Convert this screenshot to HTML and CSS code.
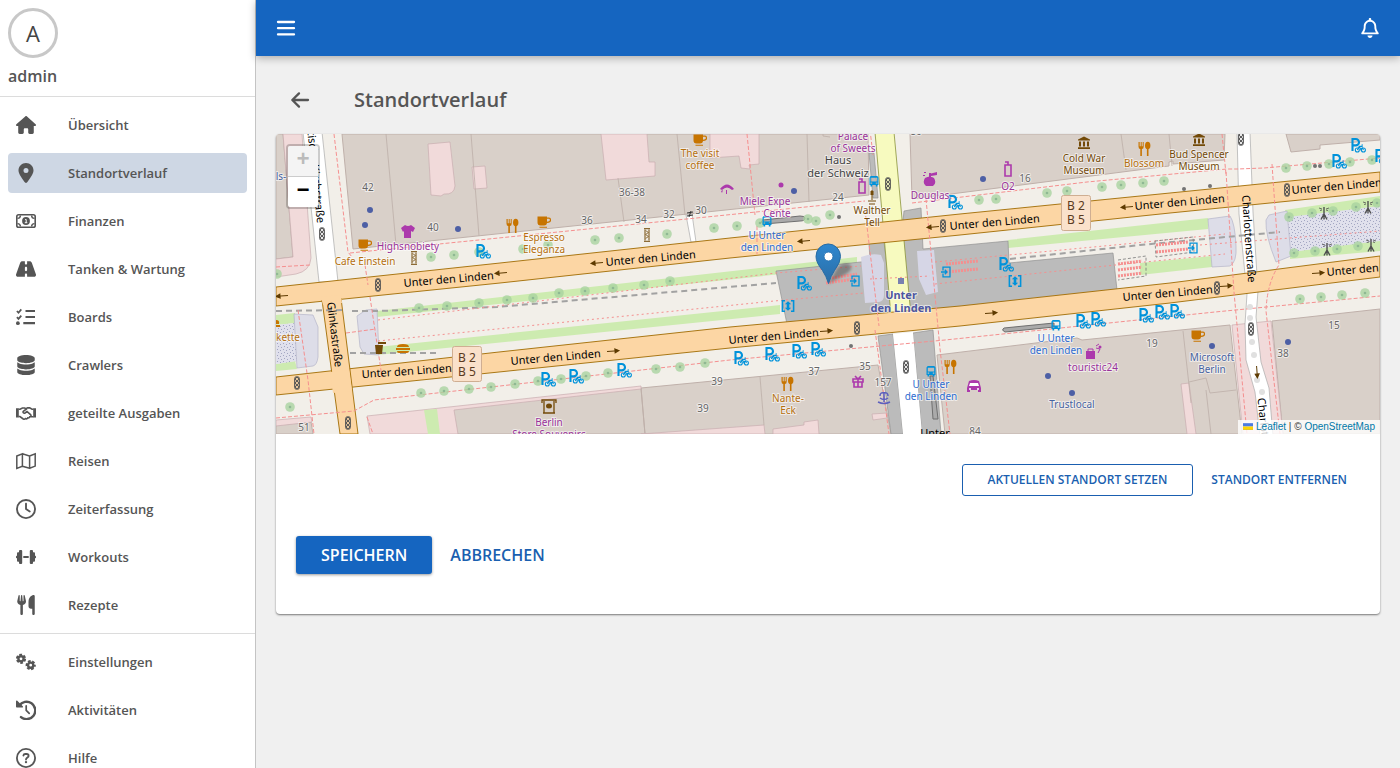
FILE: index.html
```html
<!DOCTYPE html>
<html lang="de">
<head>
<meta charset="utf-8">
<meta name="viewport" content="width=device-width, initial-scale=1">
<title>Standortverlauf</title>
<link rel="stylesheet" href="styles.css">
</head>
<body>
<div class="app">
<aside class="sidebar">
  <div class="profile">
    <div class="avatar">A</div>
    <div class="username">admin</div>
  </div>
  <nav class="nav">
    <a class="nav-item" href="#"><svg class="icon" viewBox="0 0 576 512"><path d="M575.8 255.5c0 18-15 32.1-32 32.1h-32l.7 160.2c0 2.7-.2 5.4-.5 8.1V472c0 22.1-17.9 40-40 40H392c-22.1 0-40-17.9-40-40V384c0-17.7-14.3-32-32-32H256c-17.7 0-32 14.3-32 32v88c0 22.1-17.9 40-40 40H104c-22.1 0-40-17.9-40-40V287.6H32c-18 0-32-14-32-32.1c0-9 3-17 10-24L266.4 8c7-7 15-8 22-8s15 2 21 7L564.8 231.5c8 7 12 15 11 24z"/></svg><span>Übersicht</span></a>
    <a class="nav-item active" href="#" aria-current="page"><svg class="icon" viewBox="0 0 384 512"><path d="M215.7 499.2C267 435 384 279.4 384 192C384 86 298 0 192 0S0 86 0 192c0 87.4 117 243 168.3 307.2c12.3 15.3 35.1 15.3 47.4 0zM192 128a64 64 0 1 1 0 128 64 64 0 1 1 0-128z"/></svg><span>Standortverlauf</span></a>
    <a class="nav-item" href="#"><svg class="icon line" viewBox="0 0 20 20"><rect x=".8" y="3.8" width="18.4" height="12.4" rx="1.8" stroke-width="1.6"/><path d="M1.5 7.4A3 3 0 0 0 4.4 4.5M15.6 4.5a3 3 0 0 0 2.9 2.9M1.5 12.6a3 3 0 0 1 2.9 2.9M15.6 15.5a3 3 0 0 1 2.9-2.9" stroke-width="1.4"/><circle class="solid" cx="10" cy="10" r="3.9"/><path class="knock" d="M9.2 8.5h1v3M8.8 11.7h2.5" stroke-width="1"/></svg><span>Finanzen</span></a>
    <a class="nav-item" href="#"><svg class="icon" viewBox="0 0 576 512"><path d="M256 32H181.2c-27.1 0-51.3 17.1-60.3 42.6L3.1 407.2C1.1 413 0 419.2 0 425.4C0 455.5 24.5 480 54.6 480H256V416c0-17.7 14.3-32 32-32s32 14.3 32 32v64H521.4c30.2 0 54.6-24.5 54.6-54.6c0-6.2-1.1-12.4-3.1-18.2L455.1 74.6C446 49.1 421.9 32 394.8 32H320V96c0 17.7-14.3 32-32 32s-32-14.3-32-32V32zm64 192v64c0 17.7-14.3 32-32 32s-32-14.3-32-32V224c0-17.7 14.3-32 32-32s32 14.3 32 32z"/></svg><span>Tanken &amp; Wartung</span></a>
    <a class="nav-item" href="#"><svg class="icon line" viewBox="0 0 20 20"><path d="M9.5 4H19M9.5 10H19M7.3 16.2H19" stroke-width="2.2"/><path d="M.9 4l1.6 1.7L5.3 2.4M.9 10.2l1.6 1.7 2.8-3.3" stroke-width="1.7"/><circle class="solid" cx="1.9" cy="16.2" r="1.9"/></svg><span>Boards</span></a>
    <a class="nav-item" href="#"><svg class="icon" viewBox="0 0 448 512"><path d="M448 80v48c0 44.2-100.3 80-224 80S0 172.2 0 128V80C0 35.8 100.3 0 224 0S448 35.8 448 80zM393.2 214.7c20.8-7.4 39.9-16.9 54.8-28.6V288c0 44.2-100.3 80-224 80S0 332.2 0 288V186.1c14.9 11.8 34 21.2 54.8 28.6C99.7 230.7 159.5 240 224 240s124.3-9.3 169.2-25.3zM0 346.1c14.9 11.8 34 21.2 54.8 28.6C99.7 390.7 159.5 400 224 400s124.3-9.3 169.2-25.3c20.8-7.4 39.9-16.9 54.8-28.6V432c0 44.2-100.3 80-224 80S0 476.2 0 432V346.1z"/></svg><span>Crawlers</span></a>
    <a class="nav-item" href="#"><svg class="icon line" viewBox="0 0 20 20"><path class="solid" d="M0 5.2h2.8v9.3H0zM17.2 5.2H20v9.3h-2.800z"/><path d="M2.5 6.200h1.600l2.300-1.200h2.200l1.400.7 1.600-.8h2.100l2.300 1.300h1.500M2.500 13.500h1.400l3.400 2.500c1 .5 1.800.1 2.200-.4 1 .5 1.900.2 2.300-.7 1 .2 1.700-.2 2-1.200h3.700M11 5.500L7.300 8.300c-.9.9.4 2.400 1.700 1.700l2-1.500 3.800 3.400c.5.6.3 1.100-.1 1.600" stroke-width="1.600"/></svg><span>geteilte Ausgaben</span></a>
    <a class="nav-item" href="#"><svg class="icon line" viewBox="0 0 20 20"><path d="M.8 5l5.6-2.200v12.400L.8 17.400zM6.400 2.800L13.600 5v12.300l-7.200-2.100M13.600 5l5.600-2.200v12.300l-5.600 2.200" stroke-width="1.500"/></svg><span>Reisen</span></a>
    <a class="nav-item" href="#"><svg class="icon" viewBox="0 0 512 512"><path d="M464 256A208 208 0 1 1 48 256a208 208 0 1 1 416 0zM0 256a256 256 0 1 0 512 0A256 256 0 1 0 0 256zM232 120V256c0 8 4 15.500 10.700 20l96 64c11 7.400 25.900 4.400 33.300-6.700s4.400-25.900-6.700-33.300L280 243.200V120c0-13.300-10.700-24-24-24s-24 10.700-24 24z"/></svg><span>Zeiterfassung</span></a>
    <a class="nav-item" href="#"><svg class="icon" viewBox="0 0 20 20"><rect x="3" y="3" width="3.200" height="14" rx="1"/><rect x="1" y="5.200" width="3" height="9.600" rx="1"/><rect x="0" y="8.700" width="2" height="2.600" rx=".8"/><rect x="7.300" y="9" width="5.400" height="2"/><rect x="13.800" y="3" width="3.200" height="14" rx="1"/><rect x="16" y="5.200" width="3" height="9.600" rx="1"/><rect x="18" y="8.700" width="2" height="2.600" rx=".8"/></svg><span>Workouts</span></a>
    <a class="nav-item" href="#"><svg class="icon" viewBox="0 0 448 512"><path d="M416 0C400 0 288 32 288 176V288c0 35.300 28.700 64 64 64h32V480c0 17.700 14.300 32 32 32s32-14.300 32-32V32c0-17.700-14.300-32-32-32zM64 16C64 7.800 57.900 1 49.700 .1S34.200 4.600 32.400 12.500L2.100 148.800C.7 155.100 0 161.500 0 167.900c0 45.900 35.100 83.600 80 87.700V480c0 17.700 14.300 32 32 32s32-14.300 32-32V255.600c44.900-4.100 80-41.800 80-87.700c0-6.400-.7-12.800-2.100-19.100L191.600 12.500c-1.800-8-9.300-13.300-17.400-12.400S160 7.800 160 16V150.200c0 5.400-4.400 9.800-9.800 9.800c-5.100 0-9.300-3.900-9.800-9L127.900 14.600C127.200 6.300 120.300 0 112 0s-15.200 6.300-15.900 14.600L83.700 151c-.5 5.100-4.700 9-9.800 9c-5.400 0-9.800-4.400-9.800-9.800V16z"/></svg><span>Rezepte</span></a>
  </nav>
  <nav class="nav">
    <a class="nav-item" href="#"><svg class="icon line" viewBox="0 0 20 20"><circle cx="5" cy="6.800" r="2.600" stroke-width="2.400"/><circle cx="5" cy="6.800" r="4.100" stroke-width="2" stroke-dasharray="2.700 1.590"/><circle cx="14.700" cy="13.200" r="2.600" stroke-width="2.400"/><circle cx="14.700" cy="13.200" r="4.100" stroke-width="2" stroke-dasharray="2.700 1.590" stroke-dashoffset="1.100"/></svg><span>Einstellungen</span></a>
    <a class="nav-item" href="#"><svg class="icon line" viewBox="0 0 20 20"><path d="M3.200 5.800A8.700 8.700 0 1 1 5 17.100" stroke-width="2.400" stroke-linecap="round"/><path class="solid" d="M0 1.200v5.500c0 .5.3.8.8.8h5.500c.7 0 1-.8.5-1.300L1.300.7C.8.2 0 .5 0 1.200z"/><path d="M10.200 5.900v4.400l3 3" stroke-width="1.700" stroke-linecap="round"/></svg><span>Aktivitäten</span></a>
    <a class="nav-item" href="#"><svg class="icon line" viewBox="0 0 20 20"><circle cx="10" cy="10" r="9.100" stroke-width="1.800"/><path d="M7.400 7.500c.2-1 .9-1.500 1.800-1.500h1.400c1.200 0 2 .8 2 1.900 0 1.500-2.600 1.700-2.600 3.600" stroke-width="1.800" stroke-linecap="round"/><circle class="solid" cx="10" cy="14.100" r="1.200"/></svg><span>Hilfe</span></a>
  </nav>
</aside>

<div class="content">
  <header class="topbar">
    <button class="icon-button" type="button" aria-label="Menü"><svg class="glyph" viewBox="0 0 20 20"><path d="M2 4h16M2 10.200h16M2 16.400h16" stroke-width="2.300"/></svg></button>
    <button class="icon-button" type="button" aria-label="Benachrichtigungen"><svg class="glyph filled" viewBox="0 0 448 512"><path d="M224 0c-17.700 0-32 14.300-32 32V51.200C119 66 64 130.600 64 208v25.400c0 45.400-15.500 89.500-43.800 124.900L5.300 377c-5.800 7.200-6.900 17.100-2.900 25.400S14.800 416 24 416H424c9.200 0 17.600-5.300 21.600-13.600s2.900-18.200-2.900-25.400l-14.900-18.600C399.500 322.900 384 278.800 384 233.400V208c0-77.400-55-142-128-156.800V32c0-17.700-14.300-32-32-32zm0 96c61.900 0 112 50.100 112 112v25.400c0 47.900 13.900 94.600 39.700 134.600H72.300C98.100 328 112 281.300 112 233.400V208c0-61.900 50.100-112 112-112zm64 352H160c0 17 6.700 33.300 18.700 45.300s28.300 18.700 45.300 18.700s33.300-6.700 45.300-18.700s18.700-28.300 18.700-45.300z"/></svg></button>
  </header>
  <main class="page">
    <div class="page-head">
      <button class="icon-button" type="button" aria-label="Zurück"><svg class="glyph" viewBox="0 0 20 20"><path d="M18 10H2.500M9 3.400L2.300 10 9 16.600" stroke-width="2.300"/></svg></button>
      <h1 class="title">Standortverlauf</h1>
    </div>
    <section class="card">
      <div class="map">
<svg class="map-canvas" viewBox="276 134 1104 300" preserveAspectRatio="xMidYMid slice" role="img" aria-label="Karte">
<defs>
  <pattern id="dots" width="6" height="6" patternUnits="userSpaceOnUse"><rect width="6" height="6" fill="#e0e0ec"/><path d="M1 1h1v1h-1zM4 2h1v1h-1zM2 4h1v1h-1zM5 5h1v1h-1z" fill="#a3a6c2"/></pattern>
  <g id="tree"><circle r="4.800" fill="#a9d3a0" fill-opacity=".8"/><circle r="1.300" fill="#8fb893"/></g>
  <g id="signal" fill="none" stroke="#545454" stroke-width="1"><rect x="-2.400" y="-6.300" width="4.800" height="12.600" rx="2"/><circle cy="-4" r="1.600"/><circle r="1.600"/><circle cy="4" r="1.600"/></g>
  <g id="bike" fill="none" stroke="#0092da"><path d="M-5.500 6v-12h3.300a3.200 3.200 0 0 1 0 6.400h-3" stroke-width="2.100"/><g stroke-width="1.100"><circle cx="-.7" cy="5" r="2"/><circle cx="5.400" cy="5" r="2"/><path d="M-.7 5l2-3.600h2.600L5.400 5M1.300 1.400L3 5l1.500-3.600M3.500 0h1.500"/></g></g>
  <g id="food"><path d="M-5.500-7v4.500q0 2.500 1.800 2.500V7h1.600V0Q-.3 0-.3-2.500V-7h-1v4.200h-1V-7h-1v4.200h-1V-7z"/><ellipse cx="3.700" cy="-3.500" rx="2.700" ry="3.800"/><path d="M2.900-1h1.600v8H2.900z"/></g>
  <g id="cup"><path d="M-6.500-5.500h9.500v6q0 3-3 3h-3.500q-3 0-3-3zM-4.500 4.800h7.500v1h-7.500z"/><path d="M3-3.800h2q1.400 0 1.400 1.400v.8Q6.400 0 3 .3" fill="none" stroke="#c77400" stroke-width="1.200"/></g>
  <g id="bus"><path fill="#0092da" fill-rule="evenodd" d="M-3.300-5h6.600l1.200 1.500V4H3.500v1.500H1.800V4h-3.600v1.500h-1.700V4h-1v-7.500zM-3.200-3.200v3.800h6.400v-3.800zM-3.300 1.600v1.200h1.500v-1.200zM1.800 1.600v1.200h1.500v-1.200z"/></g>
  <g id="exit" fill="none" stroke="#0092da" stroke-width="1.300"><path d="M-3-1.500v-3.300h7v9.600h-7v-3.300M-5 0h6M-1.200-2.200L1 0l-2.200 2.200"/></g>
  <g id="lift"><path fill="none" stroke="#0092da" stroke-width="1.600" d="M-3-5.200h-2.600v10.400h2.600M3-5.200h2.600v10.400H3"/><path fill="#0092da" d="M0-4.800l3.200 3H1.300v3.600h1.900L0 4.800l-3.200-3H-1.300v-3.600h-1.900z"/></g>
  <g id="museum" fill="#734a08"><path d="M0-6.500L6-3.500v1H-6v-1zM-5-1.500h2v5h-2zM-1-1.500h2v5h-2zM3-1.500h2v5h-2zM-6 4.200H6V6H-6z"/></g>
  <g id="art" fill="none" stroke="#734a08" stroke-width="1"><path d="M-3-6.300h6M-3 6.300h6M-2-5.500v11M2-5.500v11"/><path d="M-1-4.500L1-2.500-1-.5 1 1.500-1 3.500"/></g>
  <g id="way" fill="none" stroke="#5d3a00" stroke-width="1"><path d="M-6 0h11"/><path fill="#5d3a00" d="M2-2l4 2-4 2z"/></g>
  <g id="mast" stroke="#4f4f4f" stroke-width="1.400" fill="none"><path d="M0-6V6.500M0 1L-3 6.500M0 1L3 6.500"/><path d="M-5-5l3 1M5-5L2-4M-4-2.500l2-.5M4-2.500L2-3" stroke-width=".8"/></g>
  <g id="badge"><rect x="-14.500" y="-17.500" width="29" height="35" rx="2" fill="#fae1cb" stroke="#cfae92"/></g>
  <linearGradient id="pin" x1="0" y1="0" x2="0" y2="1"><stop offset="0" stop-color="#2e87cf"/><stop offset="1" stop-color="#2b6ea6"/></linearGradient>
  <filter id="soft"><feGaussianBlur stdDeviation="1.500"/></filter>
</defs>
<rect x="0" y="134" width="1700" height="300" fill="#f2efe9"/>

<g class="building">
  <path d="M276 134h7l10 123-17 2zM342 134h526l1 61L353 249zM910 134h315l-1 26-51 4v-3l-4 1v4L912 199zM1286 134h94v6l-60 5v4l-29 3z"/>
  <path d="M276 425l35-3 2 12h-37zM453 409l188-21 4 46H457zM641 388l237-23 13 69H645zM937 355l140-17 5 2 148-15 12 109H945zM1272 321l108-12v125h-97z"/>
</g>
<g class="retail">
  <path d="M283 134h19l9 124q-1 13-15 16l-20 3v-18l17-2zM428 144l22-2 5 44q-1 9-11 8l-3 2-10-1zM472 167l13-1 2 22-13 1zM601 134h46l2 28h6v14l-49 4zM710 134h49v30l-10 1 1 4-9-1-2-12-29 2z"/>
  <path d="M276 420l35-3 1 5-36 4zM367 416l274-30v3L454 410l4 24h-88zM641 434l123-9 1 9zM773 429l31-4v-3l14-2 1 14h-46zM872 414l15-1v5l-14 2zM1181 384l8-1 7 51h-9zM1232 325l39-4 12 113h-40z"/>
</g>
<path d="M424 410l13-1 3 25h-12z" fill="#cdebb0"/>
<path class="outline" d="M386 134l10 111M471 134l8 102M618 178l6 44M677 134l8 81M807 134l2 68M1121 134l5 36M1169 134l3 32M760 377l4 48M1183 331l8 72M1206 390l5 44M1189 382l17-4 4 15 26-3M823 134v2l7 1"/>

<g fill="#cdebb0">
  <path d="M377 311L857 257v9L377 317zM377 347l403-42v9L377 355zM1008 240l200-22v11l-200 19zM1140 263l72-7v11l-72 8zM1285 210l95-14v12l-95 10zM1290 252l90-12v11l-90 8zM276 315l19-2v10l-19 2zM276 364l19-3 2 8-21 2z"/>
</g>
<path fill="url(#dots)" d="M1288 217l92-11v35l-90 11zM276 325l20-2 1 38-21 3z"/>
<g fill="#dddde8" stroke="#b5b5c8" stroke-width=".7">
  <path d="M294 314l19 1 5 12v30q-1 8-5 9l-16 2zM366 310l11-1 2 46-15-1-4-7-3-31zM1208 219l22-3q5 7 6 30 1 16-6 20l-18 1zM1269 215l18-4 4 45-15 6q-11-27-10-42z"/>
</g>
<g class="platform">
  <path d="M776 271l94-10-1-18 15-1 9 74-106 8zM904 211l17-3 2 41 85-8 1 22 104-10 4 37-224 27zM878 336l15-2 10 100h-12zM913 333l20-3 8 104h-19zM869 153h5l4 45h-5z"/>
</g>
<path d="M861 257q10-4 20-2l3 8v32q0 6-5 7l-14 1zM917 251l17-1 4 42-12 3-7-16z" fill="#d6d6e6"/>
<path fill="#fff" d="M893 334l20-2 9 102h-19z"/>
<path fill="#fff" stroke="#aaa" stroke-width=".7" d="M303 132h19l16 150h-19zM686 215l6-1 4 28h-5zM1237 132h13l3 80 5 79-2 26 5 45 8 26 4 48h-13l-5-44-9-32-1-36 2-30-8-80z"/>
<path fill="#f7fabf" stroke="#8a933a" stroke-width=".8" d="M875 132h19l17 184h-20z"/>
<g class="trunk">
  <path d="M276 287L500 263 730 238 960 214 1170 193 1380 172v20l-210 21-210 22-230 23-230 25-224 23z"/>
  <path d="M276 377l223-25 231-25 230-21 210-23 210-27v21l-210 26-210 23-230 22-231 24-223 23z"/>
  <path d="M322 300l19-2 17 136h-18z"/>
</g>
<path fill="#fcd6a4" d="M321 297l20-2 1 8-19 2zM330 372l19-2 3 21-19 2z"/>
<g fill="#aaa" stroke="#6f6f6f"><path d="M763 220l37-4q5 0 5 2 0 3-5 3l-36 3q-5-2-1-4zM1004 328l50-5v4l-49 5q-4-2-1-4zM930 376h3l5 43h-5z"/></g>

<g class="rail"><path d="M276 311l69-1M352 311h25l120-4L776 283M350 353h90M1010 259l130-14 140-13"/></g>
<g class="foot">
  <path d="M334 134l14 118 4 5M276 267l34-2M350 253l515-52M365 265l3 20M298 310l10 70 6 54M370 297l12 80M346 333l30-4M276 418l78-7 20-11L500 386l230-26 215-20 270-28 165-16M912 203l175-21 140-13h10l27-1 116-10M747 134l8 81M757 254v-30M870 130l3 25M865 210l14 116M875 330l14 104M926 199l14 150 10 85M1222 134l4 40M1226 172l8 120 13 142M1272 164l7 101q-12 18-13 46l14 123M367 417l6 17"/>
  <path class="fine" d="M378 320l398-47 85-7M378 341l396-40 90-8M935 262l190-18 100-10M935 284l190-20 100-10M870 279l60-3M1200 245l180-14"/>
</g>
<g class="stairs"><path d="M826 283l29-4M832 278l25-4M946 272l32-3M946 264l32-3M1118 270l24-3M1118 276l24-3M1118 264l24-3M1156 245l32-3M1156 252l32-3"/></g>
<path fill="none" stroke="#777" stroke-width=".8" stroke-dasharray="3 2" d="M1118 260l28-4v20l-28 4M1155 241l38-4 1 15-38 5z"/>

<g>
  <use href="#tree" x="431" y="257"/><use href="#tree" x="454" y="255"/><use href="#tree" x="479" y="252"/><use href="#tree" x="523" y="249"/><use href="#tree" x="548" y="245"/><use href="#tree" x="595" y="240"/><use href="#tree" x="619" y="238"/><use href="#tree" x="667" y="234"/><use href="#tree" x="714" y="228"/><use href="#tree" x="737" y="226"/><use href="#tree" x="760" y="223"/><use href="#tree" x="808" y="219"/><use href="#tree" x="816" y="221"/><use href="#tree" x="830" y="215"/>
  <use href="#tree" x="277" y="274"/><use href="#tree" x="419" y="308"/><use href="#tree" x="447" y="306"/><use href="#tree" x="479" y="303"/><use href="#tree" x="507" y="300"/><use href="#tree" x="533" y="298"/><use href="#tree" x="559" y="293"/><use href="#tree" x="585" y="291"/><use href="#tree" x="613" y="288"/><use href="#tree" x="644" y="285"/><use href="#tree" x="670" y="281"/>
  <use href="#tree" x="290" y="407"/><use href="#tree" x="421" y="393"/><use href="#tree" x="444" y="391"/><use href="#tree" x="469" y="389"/><use href="#tree" x="491" y="387"/><use href="#tree" x="515" y="384"/><use href="#tree" x="538" y="381"/><use href="#tree" x="561" y="379"/><use href="#tree" x="586" y="376"/><use href="#tree" x="608" y="373"/><use href="#tree" x="656" y="369"/><use href="#tree" x="680" y="367"/><use href="#tree" x="705" y="363"/>
  <use href="#tree" x="979" y="200"/><use href="#tree" x="996" y="199"/><use href="#tree" x="1047" y="193"/><use href="#tree" x="1067" y="191"/><use href="#tree" x="1102" y="187"/><use href="#tree" x="1121" y="185"/><use href="#tree" x="1143" y="183"/><use href="#tree" x="1164" y="181"/><use href="#tree" x="1286" y="168"/><use href="#tree" x="1307" y="166"/><use href="#tree" x="1329" y="164"/><use href="#tree" x="1350" y="162"/><use href="#tree" x="1372" y="160"/>
  <use href="#tree" x="1289" y="217"/><use href="#tree" x="1312" y="213"/><use href="#tree" x="1333" y="211"/><use href="#tree" x="1356" y="207"/><use href="#tree" x="1377" y="203"/><use href="#tree" x="1294" y="253"/><use href="#tree" x="1315" y="251"/><use href="#tree" x="1337" y="249"/><use href="#tree" x="1358" y="246"/><use href="#tree" x="1300" y="299"/><use href="#tree" x="1321" y="297"/><use href="#tree" x="1342" y="295"/><use href="#tree" x="1365" y="293"/>
</g>
<g fill="#e0e0e0"><circle cx="1250" cy="307" r="3"/><circle cx="1250" cy="318" r="3"/><circle cx="1252" cy="342" r="3"/><circle cx="1254" cy="355" r="3"/><circle cx="1257" cy="380" r="3"/><circle cx="1262" cy="392" r="3"/></g>

<use href="#signal" x="322" y="234"/><use href="#signal" x="378" y="285"/><use href="#signal" x="297" y="383"/><use href="#signal" x="348" y="423"/><use href="#signal" x="888" y="184"/><use href="#signal" x="943" y="226"/><use href="#signal" x="857" y="328"/><use href="#signal" x="906" y="367"/><use href="#signal" x="1241" y="139"/><use href="#signal" x="1287" y="190"/><use href="#signal" x="1217" y="288"/><use href="#signal" x="1251" y="329"/>
<use href="#bike" x="483" y="251"/><use href="#bike" x="548" y="379"/><use href="#bike" x="576" y="376"/><use href="#bike" x="624" y="370"/><use href="#bike" x="741" y="358"/><use href="#bike" x="772" y="354"/><use href="#bike" x="799" y="351"/><use href="#bike" x="818" y="349"/><use href="#bike" x="804" y="283"/><use href="#bike" x="955" y="202"/><use href="#bike" x="1006" y="264"/><use href="#bike" x="1083" y="321"/><use href="#bike" x="1098" y="319"/><use href="#bike" x="1146" y="315"/><use href="#bike" x="1162" y="312"/><use href="#bike" x="1177" y="311"/><use href="#bike" x="1339" y="161"/><use href="#bike" x="1358" y="145"/><use href="#bike" x="1382" y="156"/>
<use href="#bus" x="767" y="221"/><use href="#bus" x="874" y="181"/><use href="#bus" x="931" y="371"/><use href="#bus" x="1056" y="325"/>
<use href="#exit" x="855" y="281"/><use href="#exit" x="946" y="272"/><use href="#exit" x="1193" y="248"/><use href="#lift" x="788" y="306"/><use href="#lift" x="1015" y="281"/>
<g fill="#c77400"><use href="#food" x="512" y="226"/><use href="#food" x="787" y="384"/><use href="#food" x="950" y="367"/><use href="#food" x="1144" y="149"/><use href="#cup" x="365" y="245"/><use href="#cup" x="544" y="222"/><use href="#cup" x="700" y="140"/><use href="#cup" x="1198" y="336"/><path d="M397 347q0-3 6-3t6 3zM396 348h14v2h-14zM397 351h12q0 2-2 2h-8q-2 0-2-2zM276 320q4 0 3 4h-3zM276 325h4v2h-4z"/></g>
<path d="M375 345h8l-1 9h-6zM378 342h8v2h-8zM381 341l2-3" fill="#734a08"/>
<use href="#museum" x="1084" y="143"/><use href="#museum" x="1199" y="140"/><use href="#art" x="414" y="258"/><use href="#art" x="647" y="235"/>
<g fill="none" stroke="#734a08"><path d="M542 403v-3h14v3M544 401v12h10v-12M543 413h12" stroke-width="1.300"/><ellipse cx="549" cy="406" rx="3" ry="2.500" fill="#734a08" stroke="none"/><path fill="#734a08" d="M871 191h2v4h-2zM868 201h8M869 204h6M872 196v4"/></g>
<g fill="#ac39ac">
  <path d="M401 228l4-3q3 2 6 0l4 3-2 4-2-1v7h-7v-7l-1 1zM925 178q5-3 9 0 3 5-1 8h-7q-4-3-1-8zM929 173h2v4h-2zM967 388l2-7q5-2 10 0l2 7v4h-3v-2h-8v2h-3zM1086 351h9v8h-9z"/>
  <path d="M720 189q7-9 14 0l-2 1q-5-5-10 0zM721 191l2-1-1 3zM726 190h1v4h-1zM731 190l1 3M924 172h2v1h-2zM923 175h2v1h-2zM929 174l8-2v3l-6 1z"/>
  <circle cx="781" cy="185" r="2.500"/><circle cx="1100" cy="347" r="1.500"/>
  <path fill="none" stroke="#ac39ac" stroke-width="1.600" d="M859 182h6v11h-6zM1005 165h6v11h-6zM859 179h3v3M1005 162h3v3M853 379h10v3h-10zM854 382h8v5h-8zM858 379v8M855 376l3 3 3-3"/>
  <path fill="none" stroke="#ac39ac" d="M1088 351v-2h5v2M1098 353l2-4-4-1M1096 346l3-2"/>
</g>
<path fill="none" stroke="#5d60be" stroke-width="1.500" d="M878 402q6 3 12 0M880 398q4 3 8 0M884 392v10M880 396q0-4 4-3 4-1 4 3"/>
<path fill="#fff" d="M970 383h8l1 3h-10z"/><circle cx="970" cy="389" r="1" fill="#fff"/><circle cx="978" cy="389" r="1" fill="#fff"/>
<g fill="#4d5fa5"><circle cx="370" cy="210" r="3"/><circle cx="365" cy="225" r="3"/><circle cx="458" cy="229" r="3"/><circle cx="794" cy="191" r="3"/><circle cx="983" cy="179" r="3"/><circle cx="1048" cy="376" r="3"/><circle cx="1072" cy="393" r="3"/><circle cx="1212" cy="346" r="3"/><circle cx="1288" cy="342" r="3"/><path fill="#7981b0" d="M898 278h6v6h-6z"/></g>
<g fill="#737373"><circle cx="839" cy="217" r="2"/><circle cx="851" cy="346" r="2"/><circle cx="1184" cy="189" r="2"/><circle cx="1210" cy="186" r="2"/><circle cx="1315" cy="166" r="2"/><circle cx="1320" cy="166" r="2"/></g>
<use href="#mast" x="1324" y="213"/><use href="#mast" x="1368" y="207"/><use href="#mast" x="1327" y="249"/><use href="#mast" x="1371" y="245"/>
<use href="#way" transform="translate(282 296) rotate(176)"/><use href="#way" transform="translate(501 273) rotate(175)"/><use href="#way" transform="translate(597 263) rotate(175)"/><use href="#way" transform="translate(804 241) rotate(175)"/><use href="#way" transform="translate(933 227) rotate(175)"/><use href="#way" transform="translate(1127 207) rotate(175)"/>
<use href="#way" transform="translate(613 351) rotate(-4)"/><use href="#way" transform="translate(826 331) rotate(-4)"/><use href="#way" transform="translate(991 313) rotate(-4)"/><use href="#way" transform="translate(1226 286) rotate(-4)"/><use href="#way" transform="translate(1318 273) rotate(-4)"/><use href="#way" transform="translate(1257 372) rotate(86)"/>
<path d="M687 213l6-1M687 216l6-1M691 211l-2 6" stroke="#333"/>

<g class="street">
  <text transform="translate(449 283) rotate(-5)">Unter den Linden</text>
  <text transform="translate(651 262) rotate(-5)">Unter den Linden</text>
  <text transform="translate(995 226) rotate(-5)">Unter den Linden</text>
  <text transform="translate(1180 206) rotate(-5)">Unter den Linden</text>
  <text transform="translate(1337 190) rotate(-5)">Unter den Linden</text>
  <text transform="translate(407 375) rotate(-4)">Unter den Linden</text>
  <text transform="translate(556 361) rotate(-5)">Unter den Linden</text>
  <text transform="translate(774 340) rotate(-5)">Unter den Linden</text>
  <text transform="translate(1168 297) rotate(-5)">Unter den Linden</text>
  <text transform="translate(1372 272) rotate(-5)">Unter den Linden</text>
  <text transform="translate(331 335) rotate(83)">Glinkastraße</text>
  <text transform="translate(1245 239) rotate(86)">Charlottenstraße</text>
  <text transform="translate(1262 442) rotate(84)">Charlottenstraße</text>
  <text transform="translate(310 156) rotate(84)">Neustädtische Kirchstraße</text>
  <text x="935" y="437">Unter</text>
</g>
<g class="number">
  <text x="368" y="191">42</text><text x="433" y="231">40</text><text x="587" y="224">36</text><text x="632" y="196">36-38</text><text x="641" y="223">34</text><text x="669" y="218">32</text><text x="701" y="214">30</text><text x="838" y="201">24</text><text x="1025" y="182">16</text><text x="1152" y="347">19</text><text x="1334" y="329">15</text><text x="1283" y="357">38</text><text x="717" y="385">39</text><text x="703" y="412">39</text><text x="814" y="375">37</text><text x="865" y="370">35</text><text x="883" y="386">157</text><text x="304" y="431">51</text><text x="975" y="435">84</text><text x="916" y="135">80</text>
</g>
<g class="food-label">
  <text x="365" y="265">Cafe Einstein</text><text x="544" y="241">Espresso</text><text x="544" y="253">Eleganza</text><text x="700" y="157">The visit</text><text x="700" y="169">coffee</text><text x="788" y="402">Nante-</text><text x="788" y="414">Eck</text><text x="1144" y="167">Blossom</text><text x="288" y="341">kette</text>
</g>
<g class="shop-label">
  <text x="408" y="250">Highsnobiety</text><text x="765" y="205">Miele Expe</text><text x="777" y="217">Cente</text><text x="853" y="140">Palace</text><text x="853" y="152">of Sweets</text><text x="930" y="199">Douglas</text><text x="1008" y="190">O2</text><text x="1093" y="371">touristic24</text><text x="549" y="426">Berlin</text><text x="549" y="438">Store Souvenirs</text>
</g>
<g class="office-label"><text x="1072" y="408">Trustlocal</text><text x="1212" y="361">Microsoft</text><text x="1212" y="373">Berlin</text><text x="281" y="180">ls-</text></g>
<g class="transit-label"><text x="767" y="239">U Unter</text><text x="767" y="251">den Linden</text><text x="931" y="388">U Unter</text><text x="931" y="400">den Linden</text><text x="1056" y="342">U Unter</text><text x="1056" y="354">den Linden</text></g>
<g class="museum-label"><text x="1084" y="162">Cold War</text><text x="1084" y="174">Museum</text><text x="1199" y="158">Bud Spencer</text><text x="1199" y="170">Museum</text><text x="872" y="214">Walther</text><text x="872" y="226">Tell</text></g>
<g class="place-label"><text x="838" y="164">Haus</text><text x="838" y="177">der Schweiz</text></g>
<g class="station-label"><text x="901" y="299">Unter</text><text x="901" y="312">den Linden</text></g>
<use href="#badge" x="467" y="364"/><use href="#badge" x="1076" y="213"/>
<g class="ref-label"><text x="467" y="362">B 2</text><text x="467" y="376">B 5</text><text x="1076" y="210">B 2</text><text x="1076" y="224">B 5</text></g>

<path d="M828 284l9-16q6-6 12-4 6 4-3 10z" fill="#000" opacity=".3" filter="url(#soft)"/>
<path d="M828.500 283.500q-2-7-6-13-6.500-8-6.500-14a12.200 12.500 0 0 1 24.500 0q0 6-6 14-4 6-6 13z" fill="url(#pin)" stroke="#276ba3"/>
<circle cx="828.500" cy="256.500" r="4.500" fill="#fff" stroke="#2a75b5"/>
</svg>
        <div class="zoom">
          <button class="zoom-button" type="button" aria-label="Vergrößern" disabled>+</button>
          <button class="zoom-button" type="button" aria-label="Verkleinern">−</button>
        </div>
        <div class="attribution"><a href="#"><svg class="flag" viewBox="0 0 12 8"><path fill="#4c7be1" d="M0 0h12v4H0z"/><path fill="#ffd500" d="M0 4h12v3H0z"/><path fill="#e0bc00" d="M0 7h12v1H0z"/></svg> Leaflet</a> | © <a href="#">OpenStreetMap</a></div>
      </div>
      <div class="map-actions">
        <button class="button small outlined" type="button">Aktuellen Standort setzen</button>
        <button class="button small text" type="button">Standort entfernen</button>
      </div>
      <div class="form-actions">
        <button class="button primary" type="submit">Speichern</button>
        <button class="button text" type="button">Abbrechen</button>
      </div>
    </section>
  </main>
</div>
</div>
</body>
</html>
```
FILE: styles.css
```css
* { box-sizing: border-box; }
body {
  margin: 0;
  background: #f0f0f0;
  color: #555;
  font-family: "Open Sans", "Noto Sans", sans-serif;
  font-size: 13px;
}
button { font-family: inherit; cursor: pointer; }
.app { display: flex; height: 100vh; overflow: hidden; }

/* Sidebar */
.sidebar {
  flex: 0 0 256px;
  overflow: hidden;
  background: #fff;
  border-right: 1px solid #c4c4c4;
}
.profile { padding: 8px; }
.avatar {
  display: flex;
  align-items: center;
  justify-content: center;
  width: 50px;
  height: 50px;
  border: 3px solid #c8c8c8;
  border-radius: 50%;
  color: #444;
  font-size: 22px;
}
.username { margin-top: 6px; font-size: 16px; font-weight: 600; line-height: 24px; }
.nav {
  display: flex;
  flex-direction: column;
  gap: 8px;
  padding: 8px;
  border-top: 1px solid #dcdcdc;
}
.nav-item {
  display: flex;
  align-items: center;
  gap: 32px;
  height: 40px;
  padding: 0 8px;
  border-radius: 4px;
  color: #555;
  font-weight: 600;
  line-height: 20px;
  text-decoration: none;
}
.nav-item.active { background: #ced7e4; }
.icon { width: 20px; height: 20px; fill: #555; }
.icon.line { fill: none; stroke: #555; }
.icon .solid { fill: #555; stroke: none; }
.icon .knock { stroke: #fff; }

/* Content */
.content { flex: 1; min-width: 0; display: flex; flex-direction: column; }
.topbar {
  display: flex;
  justify-content: space-between;
  align-items: center;
  height: 56px;
  padding: 0 10px;
  background: #1565c0;
  color: #fff;
  box-shadow: 0 2px 8px rgba(0, 0, 0, .3);
}
.icon-button {
  display: flex;
  align-items: center;
  justify-content: center;
  width: 40px;
  height: 40px;
  padding: 0;
  border: 0;
  background: none;
  color: inherit;
}
.glyph {
  width: 20px;
  height: 20px;
  fill: none;
  stroke: currentColor;
  stroke-linecap: round;
  stroke-linejoin: round;
}
.glyph.filled { fill: currentColor; stroke: none; }
.page { padding: 24px 20px; }
.page-head { display: flex; align-items: center; gap: 34px; padding: 0 4px 14px; }
.title { margin: 0; font-size: 20px; font-weight: 600; line-height: 28px; }
.card {
  overflow: hidden;
  background: #fff;
  border-radius: 4px;
  box-shadow: 0 1px 2px rgba(0, 0, 0, .5);
}
.map-actions { display: flex; justify-content: flex-end; padding: 30px 15px 20px; }
.form-actions { display: flex; padding: 20px 20px 40px; }
.button {
  height: 38px;
  padding: 0 25px;
  border: 0;
  border-radius: 3px;
  background: none;
  color: #1a5fb0;
  font-size: 16px;
  font-weight: 600;
  line-height: 24px;
  text-transform: uppercase;
}
.button.primary {
  background: #1565c0;
  color: #fff;
  box-shadow: 0 1px 3px rgba(0, 0, 0, .4);
}
.button.small { height: 32px; font-size: 12px; line-height: 18px; }
.button.outlined { border: 1px solid #1a5fb0; }
.button.text { padding: 0 18px; }

/* Map */
.map { position: relative; height: 300px; overflow: hidden; }
.map-canvas { display: block; width: 100%; height: 100%; font-family: "Noto Sans", sans-serif; }
.building path { fill: #d9d0c9; stroke: #bfb0aa; }
.retail path { fill: #f1dada; stroke: #c9adb0; stroke-width: .7; }
.outline { fill: none; stroke: #bdaea8; stroke-width: .8; }
.platform path { fill: #bbb; stroke: #929292; stroke-width: .7; }
.trunk path { fill: #fcd6a4; stroke: #a06b00; stroke-width: .9; }
.rail path { fill: none; stroke: #a2a2a2; stroke-width: 2; stroke-dasharray: 6 4; }
.foot path { fill: none; stroke: #f58f8f; stroke-dasharray: 4 2; }
.foot .fine { stroke-dasharray: 2 3; }
.stairs path { fill: none; stroke: #f58f8f; stroke-width: 3; stroke-dasharray: 2 1; }
.map-canvas text {
  font-size: 10px;
  text-anchor: middle;
  paint-order: stroke;
  stroke: rgba(255, 255, 255, .6);
  stroke-width: 2px;
  stroke-linejoin: round;
}
.map-canvas .street text { fill: #000; stroke: none; font-size: 11px; }
.number text { fill: #666; }
.food-label text { fill: #b5700f; }
.shop-label text { fill: #993399; }
.office-label text { fill: #4863a0; }
.transit-label text { fill: #2d6cd0; }
.museum-label text { fill: #734a08; }
.map-canvas .place-label text { fill: #444; font-size: 11px; }
.map-canvas .station-label text { fill: #4d56a0; font-size: 11px; font-weight: 700; }
.map-canvas .ref-label text { fill: #5b3a20; stroke: none; font-size: 12px; }
.zoom {
  position: absolute;
  top: 10px;
  left: 10px;
  border: 2px solid rgba(0, 0, 0, .2);
  border-radius: 4px;
  background-clip: padding-box;
}
.zoom-button {
  display: block;
  width: 30px;
  height: 30px;
  padding: 0;
  border: 0;
  background: #fff;
  color: #000;
  font-family: "Liberation Mono", monospace;
  font-size: 22px;
  font-weight: 700;
  line-height: 30px;
}
.zoom-button:first-child { height: 31px; border-bottom: 1px solid #ccc; border-radius: 2px 2px 0 0; }
.zoom-button:last-child { border-radius: 0 0 2px 2px; }
.zoom-button:disabled { background: #f4f4f4; color: #bbb; }
.attribution {
  position: absolute;
  right: 0;
  bottom: 0;
  padding: 0 5px;
  background: rgba(255, 255, 255, .8);
  color: #333;
  font-family: "Liberation Sans", Arial, sans-serif;
  font-size: 10px;
  line-height: 14px;
}
.attribution a { color: #0078a8; text-decoration: none; }
.flag { width: 10px; height: 7px; }
```
